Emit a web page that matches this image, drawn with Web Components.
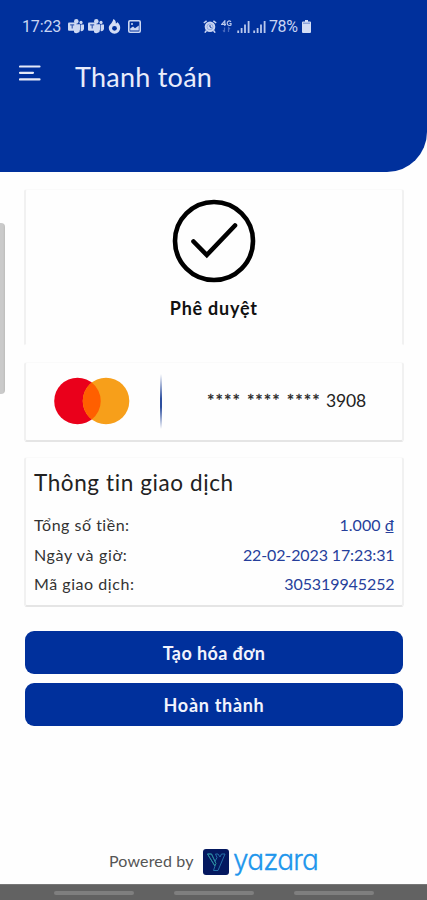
<!DOCTYPE html>
<html lang="vi">
<head>
<meta charset="utf-8">
<meta name="viewport" content="width=device-width, initial-scale=1">
<title>Thanh toán</title>
<style>
  body {
    margin: 0;
    background: #fefefe;
    font-family: Lato, "Open Sans", sans-serif;
  }
</style>
</head>
<body>
<pay-screen>
  <pay-header slot="header" heading="Thanh toán">
    <status-bar slot="status" time="17:23" battery="78%"></status-bar>
  </pay-header>

  <pay-card style="--card-height: 157px; --card-bottom: transparent">
    <pay-result>Phê duyệt</pay-result>
  </pay-card>
  <pay-card style="--card-height: 80px">
    <card-number last="3908"></card-number>
  </pay-card>
  <pay-card style="--card-height: 150px">
    <detail-list heading="Thông tin giao dịch">
      <detail-row label="Tổng số tiền:" style="--label-gap: .5px; --value-gap: .05px">1.000 ₫</detail-row>
      <detail-row label="Ngày và giờ:" style="--label-gap: .65px; --value-gap: -.12px">22-02-2023 17:23:31</detail-row>
      <detail-row label="Mã giao dịch:" style="--label-gap: .55px; --value-gap: -.1px">305319945252</detail-row>
    </detail-list>
  </pay-card>

  <pay-button slot="actions">Tạo hóa đơn</pay-button>
  <pay-button slot="actions" style="--gap: .7px">Hoàn thành</pay-button>

  <powered-by slot="footer"></powered-by>
  <nav-bar slot="footer"></nav-bar>
</pay-screen>

<script>
// Clones the template into an open shadow root
function attach(el, html) {
  const template = document.createElement('template');
  template.innerHTML = html;
  el.attachShadow({ mode: 'open' }).appendChild(template.content.cloneNode(true));
}

class PayScreen extends HTMLElement {
  constructor() {
    super();
    attach(this, `
      <style>
        :host {
          display: flex;
          flex-direction: column;
          position: relative;
          height: 900px;
          overflow: hidden;
        }
        main {
          display: flex;
          flex-direction: column;
          gap: 15.5px;
          padding: 17px 23.5px 0 24px;
        }
        .actions {
          display: flex;
          flex-direction: column;
          gap: 9px;
          padding: 24px 24px 0 25px;
        }
        footer { margin-top: auto; }
        /* Edge panel handle, floats over the content */
        .handle {
          position: absolute;
          left: 0;
          top: 223px;
          width: 5px;
          height: 171px;
          border-radius: 0 4px 4px 0;
          background: linear-gradient(90deg, #cacaca 60%, #bdbdbb);
        }
      </style>
      <slot name="header"></slot>
      <main><slot></slot></main>
      <div class="actions"><slot name="actions"></slot></div>
      <footer><slot name="footer"></slot></footer>
      <div class="handle"></div>
    `);
  }
}
customElements.define('pay-screen', PayScreen);


class PayHeader extends HTMLElement {
  constructor() {
    super();
    attach(this, `
      <style>
        :host {
          display: block;
          box-sizing: border-box;
          height: 172px;
          flex: none;
          background: #00309c;
          color: #e9ecfb;
          border-radius: 0 0 40px 0;
        }
        .bar {
          display: flex;
          align-items: flex-start;
          padding: 17px 19px 0;
        }
        svg { display: block; margin-top: 3px; }
        h1 {
          margin: 0 0 0 34px;
          font-size: 27px;
          line-height: 32px;
          font-weight: 400;
          letter-spacing: .25px;
        }
      </style>
      <slot name="status"></slot>
      <div class="bar">
        <svg width="22" height="20" viewBox="0 0 22 20" stroke="#e4e8f8" stroke-width="2.2" stroke-linecap="round">
          <path d="M1 2.5H20.5M1 8.8H14M1 15.4H20.5"/>
        </svg>
        <h1></h1>
      </div>
    `);
  }
  connectedCallback() {
    this.shadowRoot.querySelector('h1').textContent = this.getAttribute('heading');
  }
}
customElements.define('pay-header', PayHeader);


const teamsIcon = `
  <svg width="16" height="15" viewBox="0 0 16 15" fill="#cdd8f2">
    <circle cx="8.3" cy="2.4" r="2.3"/><circle cx="13" cy="3.4" r="1.6"/>
    <path d="M6 5.2h6v5.2a3.6 3.6 0 0 1-6 2.8z"/>
    <path d="M12.6 5.6H16v4a2.6 2.6 0 0 1-3.4 2.4z"/>
    <rect y="3.4" width="8.4" height="8.4" rx="1"/>
    <path d="M2.2 5.8h4M4.2 5.8v3.800" stroke="#3a5db3" stroke-width="1.2"/>
  </svg>`;

const signalIcon = `
  <svg width="13" height="13" viewBox="0 0 13 13" stroke="#b9c8ec" stroke-width="1.8">
    <path d="M1.2 13V10.5M4.6 13V8M8 13V4.5M11.6 13V1"/>
  </svg>`;

class StatusBar extends HTMLElement {
  constructor() {
    super();
    attach(this, `
      <style>
        :host {
          display: flex;
          align-items: center;
          box-sizing: border-box;
          height: 44px;
          padding: 9px 0 0 22px;
          font-family: Roboto, sans-serif;
          font-size: 16px;
          color: #c9d5f3;
        }
        svg { display: block; flex: none; }
        .time { width: 46px; letter-spacing: -.15px; }
        .left, .right { display: flex; align-items: center; }
        .left { gap: 4px; width: 135px; }
        .right { gap: 3px; }
        .level { letter-spacing: -.4px; margin-right: 1px; }
      </style>
      <span class="time"></span>
      <div class="left">
        ${teamsIcon}${teamsIcon}
        <svg width="13" height="15" viewBox="0 0 13 15">
          <path d="M5.4 0C7.8 1.3 8 3.2 7.8 4.4 8.8 4 9.2 3.4 9.3 2.9 11.5 4.8 12.3 7 12.2 9a5.7 5.7 0 0 1-11.4 0C.8 5.5 4.5 4.5 5.4 0z" fill="#d3ddf5"/>
          <circle cx="6.5" cy="9.3" r="2.4" fill="#00309c"/>
        </svg>
        <svg style="margin-left: 3px" width="13" height="13" viewBox="0 0 13 13">
          <rect x=".8" y=".8" width="11.4" height="11.4" rx="1.2" fill="none" stroke="#cdd8f2" stroke-width="1.6"/>
          <path d="M2.2 10.5V8.500L5 6.400l2 1.800 3.800-2.800v5.100z" fill="#cdd8f2"/>
          <circle cx="4" cy="4" r="1" fill="#cdd8f2"/>
        </svg>
      </div>
      <div class="right">
        <svg width="14" height="13" viewBox="0 0 14 13">
          <path d="M.8 3L3.6.8M13.2 3L10.4.8M3.5 10.5L1.8 12.6M10.5 10.5l1.7 2.1" stroke="#c9d5f3" stroke-width="1.5"/>
          <circle cx="7" cy="6.8" r="5.3" fill="#c9d5f3"/>
          <circle cx="7" cy="6.8" r="3" fill="none" stroke="#7f98d2" stroke-width=".7"/>
          <path d="M7 5v2l1.6.8" fill="none" stroke="#00309c" stroke-width=".9"/>
        </svg>
        <svg style="margin: 0 2px 0 1px" width="11" height="13" viewBox="0 0 11 13" fill="none" stroke="#b9c8ec" stroke-width="1.2">
          <path d="M3.8 6V.9L.7 4.4H5M10 1.8C8.5.2 6.2 1 6.2 3.2S8.5 6 10 5V3.5H8.4"/>
          <path d="M3.5 7.5V12M2 10.3L3.5 12M7.5 12V7.5L9 9.2" stroke="#4769bd"/>
        </svg>
        ${signalIcon}${signalIcon}
        <span class="level"></span>
        <svg width="9" height="13" viewBox="0 0 9 13">
          <path d="M3 0h3v1.5h2q1 0 1 1V12q0 1-1 1H1q-1 0-1-1V2.5q0-1 1-1h2z" fill="#d3ddf5"/>
          <path d="M1 3.2H8" stroke="#6d8ad0" stroke-width="1"/>
        </svg>
      </div>
    `);
  }
  connectedCallback() {
    this.shadowRoot.querySelector('.time').textContent = this.getAttribute('time');
    this.shadowRoot.querySelector('.level').textContent = this.getAttribute('battery');
  }
}
customElements.define('status-bar', StatusBar);


class PayCard extends HTMLElement {
  constructor() {
    super();
    attach(this, `
      <style>
        :host {
          display: block;
          box-sizing: border-box;
          height: var(--card-height);
          border: 1px solid #fafafa;
          border-left: 2px solid #f1f1f1;
          border-right: 2px solid #f1f1f1;
          border-bottom: 2px solid var(--card-bottom, #e5e5e5);
          border-radius: 3px;
          background: #fefefe;
        }
      </style>
      <slot></slot>
    `);
  }
}
customElements.define('pay-card', PayCard);


class PayResult extends HTMLElement {
  constructor() {
    super();
    attach(this, `
      <style>
        :host {
          display: flex;
          flex-direction: column;
          align-items: center;
          padding-top: 9px;
          color: #111;
          font-size: 18px;
          line-height: 24px;
          font-weight: 700;
          letter-spacing: .75px;
        }
        svg { display: block; margin-bottom: 12.5px; }
      </style>
      <svg width="84" height="84" viewBox="0 0 84 84" fill="none" stroke="#000">
        <circle cx="42" cy="42" r="39" stroke-width="4.6"/>
        <path d="M21.5 42.5L34.8 56 63 26.5" stroke-width="4.6" stroke-linecap="round"/>
      </svg>
      <span><slot></slot></span>
    `);
  }
}
customElements.define('pay-result', PayResult);


class CardNumber extends HTMLElement {
  constructor() {
    super();
    attach(this, `
      <style>
        :host {
          display: flex;
          align-items: center;
          height: 100%;
          padding-left: 28px;
          color: #222;
        }
        svg { display: block; }
        .line {
          width: 2px;
          height: 55px;
          margin: 0 45px 0 30px;
          background: linear-gradient(#fefefe, #2d4f9f 45%, #2d4f9f 60%, #fefefe);
        }
        .number {
          display: flex;
          align-items: center;
          font-size: 17.5px;
          line-height: 22px;
        }
        .mask {
          width: 119px;
          letter-spacing: 1.05px;
          word-spacing: .4px;
          white-space: nowrap;
          -webkit-text-stroke: .3px #222;
        }
        .last { letter-spacing: -.15px; }
      </style>
      <svg width="76" height="48" viewBox="0 0 76 48">
        <circle cx="23.5" cy="24" r="23.3" fill="#ea001b"/>
        <circle cx="52" cy="24" r="23.3" fill="#f79f1a"/>
        <path d="M37.75 5.6a23.3 23.3 0 0 1 0 36.8a23.3 23.3 0 0 1 0-36.8z" fill="#ff5f00"/>
      </svg>
      <div class="line"></div>
      <div class="number"><span class="mask">**** **** ****</span><span class="last"></span></div>
    `);
  }
  connectedCallback() {
    this.shadowRoot.querySelector('.last').textContent = this.getAttribute('last');
  }
}
customElements.define('card-number', CardNumber);


class DetailList extends HTMLElement {
  constructor() {
    super();
    attach(this, `
      <style>
        :host {
          display: block;
          padding: 10.5px 7px 0 8px;
        }
        h2 {
          margin: 0 0 13.5px;
          color: #222;
          font-size: 22.5px;
          line-height: 28px;
          font-weight: 400;
          letter-spacing: .6px;
        }
      </style>
      <h2></h2>
      <slot></slot>
    `);
  }
  connectedCallback() {
    this.shadowRoot.querySelector('h2').textContent = this.getAttribute('heading');
  }
}
customElements.define('detail-list', DetailList);


class DetailRow extends HTMLElement {
  constructor() {
    super();
    attach(this, `
      <style>
        :host {
          display: flex;
          justify-content: space-between;
          font-size: 16px;
          line-height: 29.5px;
        }
        .label { color: #333; letter-spacing: var(--label-gap); }
        .value { color: #263f9b; letter-spacing: var(--value-gap); }
      </style>
      <span class="label"></span>
      <span class="value"><slot></slot></span>
    `);
  }
  connectedCallback() {
    this.shadowRoot.querySelector('.label').textContent = this.getAttribute('label');
  }
}
customElements.define('detail-row', DetailRow);


class PayButton extends HTMLElement {
  constructor() {
    super();
    attach(this, `
      <style>
        :host { display: block; }
        button {
          display: block;
          width: 100%;
          height: 43px;
          padding: 0;
          border: 0;
          border-radius: 9px;
          background: #00309c;
          color: #f2f4fd;
          font: 700 18px/42px Lato, "Open Sans", sans-serif;
          letter-spacing: var(--gap, .4px);
        }
      </style>
      <button type="button"><slot></slot></button>
    `);
  }
}
customElements.define('pay-button', PayButton);


class PoweredBy extends HTMLElement {
  constructor() {
    super();
    attach(this, `
      <style>
        :host {
          display: flex;
          align-items: center;
          height: 27px;
          padding: 0 0 9px 109px;
          color: #555;
          font-size: 16px;
        }
        .text { width: 94px; letter-spacing: .15px; margin-top: -3px; }
        svg { display: block; margin-right: 4px; }
        .brand {
          margin-top: -3px;
          color: #2196ec;
          font-family: Inter, Lato, sans-serif;
          font-feature-settings: "cv11";
          font-size: 28px;
          font-weight: 300;
          line-height: 27px;
          letter-spacing: -.8px;
          -webkit-text-stroke: .3px #2196ec;
        }
      </style>
      <span class="text">Powered by</span>
      <svg width="26" height="26" viewBox="0 0 26 26">
        <rect width="26" height="26" rx="3" fill="#04185f"/>
        <g fill="none" stroke-width="1" stroke-linejoin="round">
          <path d="M4.500 5H8.500L12 12.500 14 8.500 12.500 5H15L17 8 18.500 5H22L15 21.500H10.500L12 17z" stroke="#256fa8"/>
          <path d="M4.500 5H8.500L13 14.500 11.800 17z" stroke="#2b8d9a"/>
        </g>
      </svg>
      <span class="brand">yazara</span>
    `);
  }
}
customElements.define('powered-by', PoweredBy);


class NavBar extends HTMLElement {
  constructor() {
    super();
    attach(this, `
      <style>
        :host {
          display: flex;
          justify-content: center;
          gap: 40px;
          box-sizing: border-box;
          height: 16px;
          padding-top: 6px;
          border-top: 1px solid #777;
          background: #626262;
        }
        i {
          width: 80px;
          height: 4px;
          border-radius: 2px;
          background: #7f7f7f;
        }
      </style>
      <i></i><i></i><i></i>
    `);
  }
}
customElements.define('nav-bar', NavBar);
</script>
</body>
</html>
